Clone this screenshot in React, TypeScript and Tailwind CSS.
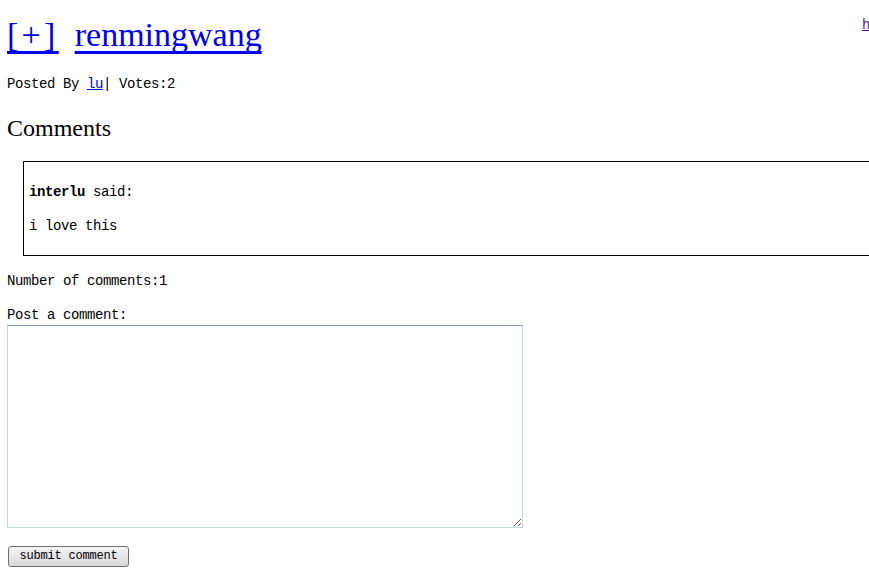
const mono = { fontFamily: '"Liberation Mono", "Noto Sans CJK SC", monospace' };

export default function App() {
  return (
    <div
      className="relative w-full min-h-screen overflow-hidden bg-white text-black px-[7px] pt-[15px] font-['Liberation_Mono','Noto_Sans_CJK_SC',monospace] text-[14px] tracking-[-0.4px]"
    >
      {/* 右上角被截断的链接 */}
      <a href="#" className="absolute left-[862px] top-[17px] text-[14px] leading-[16px] text-[#551a8b] underline">
        h
      </a>

      <h1 className="flex gap-[16px] leading-[40px] text-[34px] tracking-normal font-['Liberation_Serif','Noto_Sans_CJK_SC',serif]">
        <a
          href="#"
          className="text-[#0000ee] underline underline-offset-[5px] [text-decoration-skip-ink:none] tracking-[3.3px]"
        >
          [+]
        </a>
        <a
          href="#"
          className="text-[#0000ee] underline underline-offset-[5px] [text-decoration-skip-ink:none]"
        >
          renmingwang
        </a>
      </h1>

      <p className="mt-[21px] leading-[16px]">
        Posted By <a href="#" className="text-[#0000ee] underline">lu</a>| Votes:2
      </p>

      <h2 className="mt-[22px] leading-[28px] text-[24px] tracking-normal font-['Liberation_Serif','Noto_Sans_CJK_SC',serif]">
        Comments
      </h2>

      <div className="mt-[19px] ml-[16px] w-[900px] border border-black px-[5px] pt-[22px] pb-[21px]">
        <p className="leading-[16px]">
          <b className="font-bold">interlu</b> said:
        </p>
        <p className="mt-[18px] leading-[16px]">i love this</p>
      </div>

      <p className="mt-[17px] leading-[16px]">Number of comments:1</p>

      <form className="mt-[18px]" onSubmit={(e) => e.preventDefault()}>
        <label className="block leading-[16px]">Post a comment:</label>
        <textarea
          className="block mt-[2px] w-[516px] h-[203px] border border-[#c5d6de] border-t-[#7f9db9] bg-white outline-none"
          style={mono}
        />
        <button
          type="submit"
          className="block mt-[18px] ml-px w-[121px] h-[21px] rounded-[3px] border border-[#707070] bg-gradient-to-b from-[#f4f4f4] to-[#d8d8d8] text-[12px] leading-[19px] tracking-[-0.2px]"
        >
          submit comment
        </button>
      </form>
    </div>
  );
}
